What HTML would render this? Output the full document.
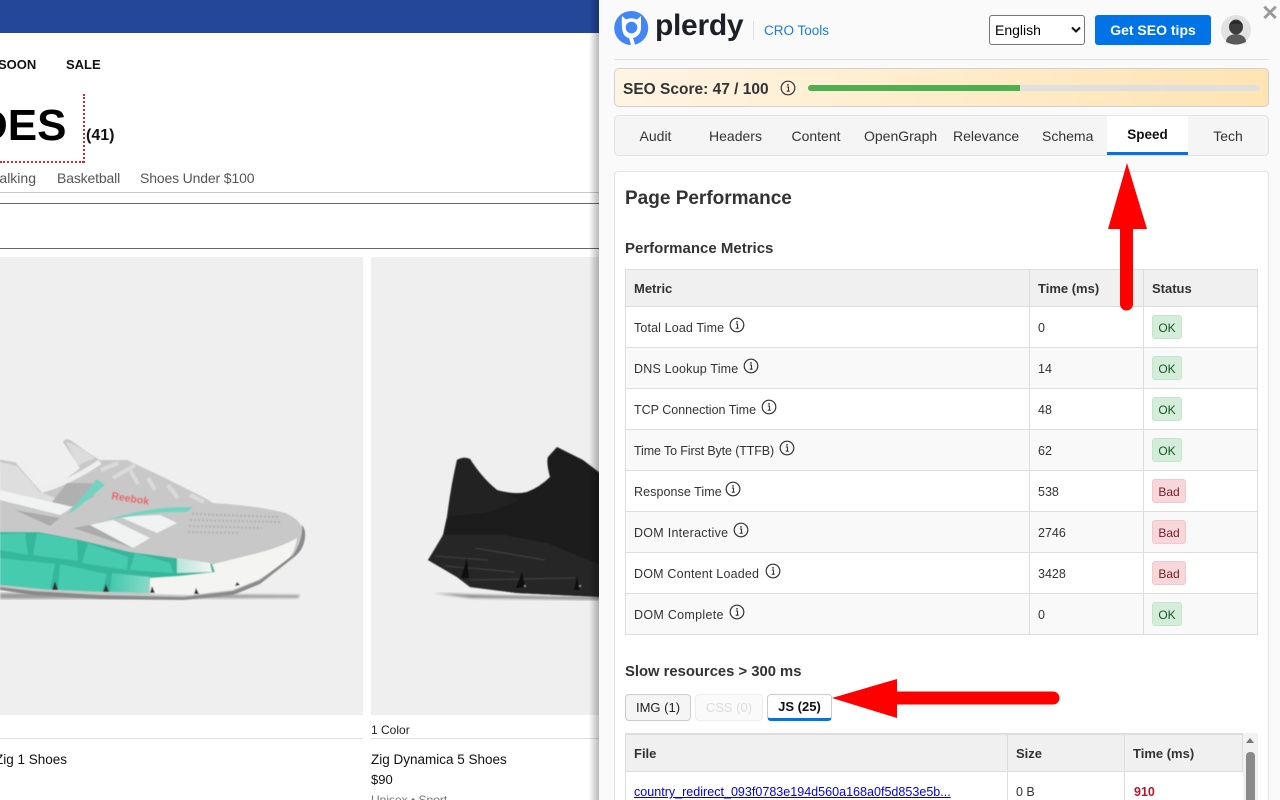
<!DOCTYPE html>
<html><head><meta charset="utf-8"><style>
html,body{margin:0;padding:0;width:1280px;height:800px;overflow:hidden;background:#fff}
*{box-sizing:border-box}
.a{position:absolute;white-space:nowrap}
body{font-family:"Liberation Sans",sans-serif;color:#333;position:relative}
.tab{position:absolute;top:124px;font-size:14px;color:#333;line-height:24px;text-align:center}
.b{position:absolute;left:1152px;width:30px;height:24px;border-radius:3px;font-size:12px;line-height:24px;text-align:center}
.ok{background:#d4edda;color:#155724;border:1px solid #c3e6cb}
.bad{background:#f8d7da;color:#721c24;border:1px solid #f5c6cb;width:34px}
.row{position:absolute;left:625px;width:633px;height:41px;border-bottom:1px solid #ddd;border-left:1px solid #ddd;border-right:1px solid #ddd}
.l{position:absolute;left:634px;font-size:12.5px;line-height:18px;color:#333;white-space:nowrap}
.t{position:absolute;left:1038px;font-size:12.5px;line-height:18px;color:#333}
.v{position:absolute;width:1px;background:#ddd}
.th{position:absolute;font-size:13px;font-weight:bold;color:#333;line-height:18px}
.i{position:absolute;width:16px;height:16px}
</style></head><body>
<svg width="0" height="0" style="position:absolute"><defs><g id="inf"><circle cx="8" cy="8" r="6.8" fill="none" stroke="#333" stroke-width="1.2"/><circle cx="8" cy="4.9" r=".9" fill="#333"/><path d="M6.8 7h1.7v4M6.700 11.200h3" fill="none" stroke="#333" stroke-width="1.1"/></g><filter id="sb"><feGaussianBlur stdDeviation=".6"/></filter><filter id="sh"><feGaussianBlur stdDeviation="1.2"/></filter></defs></svg>

<!-- page behind -->
<div class="a" style="left:0;top:0;width:600px;height:33px;background:#24479a"></div>
<div class="a" style="left:-2px;top:57px;font-size:13px;font-weight:bold;color:#111;line-height:16px">SOON</div>
<div class="a" style="left:66px;top:57px;font-size:13px;font-weight:bold;color:#111;line-height:16px;letter-spacing:0">SALE</div>
<div class="a" style="left:-24px;top:101px;font-size:44px;font-weight:bold;color:#000;line-height:50px">DES</div>
<div class="a" style="left:86px;top:126px;font-size:16px;font-weight:bold;color:#111;line-height:20px">(41)</div>
<div class="a" style="left:83px;top:94px;width:2px;height:69px;border-left:2px dotted #d9262e"></div>
<div class="a" style="left:0;top:161px;width:84px;height:2px;border-top:2px dotted #d9262e"></div>
<div class="a" style="left:-4px;top:170px;width:40px;overflow:hidden;font-size:14px;color:#555;line-height:17px;text-align:right">alking</div>
<div class="a" style="left:57px;top:170px;font-size:14px;color:#555;line-height:17px;letter-spacing:-.15px">Basketball</div>
<div class="a" style="left:140px;top:170px;font-size:14px;color:#555;line-height:17px;letter-spacing:-.15px">Shoes Under $100</div>
<div class="a" style="left:0;top:192px;width:600px;height:1px;background:#c8c8c8"></div>
<div class="a" style="left:0;top:203px;width:600px;height:1px;background:#666"></div>
<div class="a" style="left:0;top:248px;width:600px;height:1px;background:#666"></div>
<div class="a" style="left:0;top:257px;width:363px;height:458px;background:#f0eff0"></div>
<div class="a" style="left:371px;top:257px;width:229px;height:458px;background:#f0eff0"></div>

<!-- grey shoe: viewBox origin at (0,400) -->
<svg class="a" style="left:0;top:400px" width="320" height="220" viewBox="0 0 320 220">
<path d="M0 193 L300 195 L298 198 L0 199Z" fill="#9c9c9c" filter="url(#sh)"/>
<g filter="url(#sb)">
<path d="M0 55 L17 58 Q30 72 43 88 Q60 85 80 68 L63 42 Q66 37 72 41 Q86 52 100 60 L127 60 L165 78 L203 97 L213 103 Q260 106 285 113 Q303 120 305 137 Q303 150 293 157 Q275 172 260 182 Q245 192 233 193 Q210 198 183 199 L100 197 L33 193 L0 187Z" fill="#c8c8c8"/>
<path d="M66 42 Q72 42 95 58 L85 62 L78 66Z" fill="#dcdcdc"/>
<path d="M0 57 L17 60 Q30 76 43 90 Q70 82 100 62" fill="none" stroke="#eeeeee" stroke-width="5"/>
<path d="M0 62 L17 66 L40 92 L60 100 L52 102 L0 90Z" fill="#dedede"/>
<path d="M52 102 L67 83 L97 83 L93 97 L70 110Z" fill="#b0b0b0"/>
<path d="M15 110 L60 118 L50 126 Z M73 128 L90 125 L133 148 L115 142Z" fill="#ababab"/>
<path d="M0 90 L73 107 L60 115 L0 100Z M90 125 L113 120 L150 138 L133 148Z M120 117 L160 115 L177 123 L157 133Z" fill="#f1f3f2"/>
<path d="M67 115 L97 79 L105 85 L75 110Z M107 120 Q150 106 193 107 L187 112 Q150 112 133 116Z" fill="#6fd5c0"/>
<path d="M192 114 L280 117 M190 120 L282 122 M189 126 L262 128 M188 132 L240 133" stroke="#b0b0b0" stroke-width="2" stroke-dasharray="2 2" fill="none"/>
<path d="M101 70 L118 63 M113 78 L135 65 M130 70 L138 84 M148 78 L155 90 M168 85 L178 98 M190 95 L204 102" stroke="#dadada" stroke-width="4" fill="none"/>
<text x="111" y="99" transform="rotate(9 111 99)" font-family="Liberation Sans,sans-serif" font-size="10.500" font-weight="bold" fill="#e85a5f">Reebok</text>
<path d="M150 177 L178 174 L210 165 L250 155 Q280 148 297 138 Q296 148 290 157 Q275 170 258 180 L232 190 L190 195 L150 194Z" fill="#f4f4f2"/>
<path d="M0 132 L38 132 L80 140 L130 152 L175 158 L212 164 L215 172 L180 176 L150 178 L148 193 L60 190 L0 185Z" fill="#36b79c"/>
<defs><linearGradient id="fd" x1="0" x2="1"><stop offset="0" stop-color="#44c9ad"/><stop offset="1" stop-color="#f4f4f2"/></linearGradient></defs>
<path d="M0 134 L25 133 L28 155 L0 150Z M37 133 L77 140 L78 161 L33 155Z M88 143 L128 157 L127 170 L82 163Z M135 153 L170 163 L173 173 L130 170Z M0 158 L55 164 L50 190 L0 185Z M60 164 L107 174 L102 192 L58 190Z" fill="#46cbaf"/>
<path d="M177 158 L210 163 L212 172 L177 173Z M112 173 L150 177 L148 193 L110 192Z" fill="url(#fd)"/>
<path d="M0 187 L33 191 L100 195 L183 197 L233 191 L260 180 L293 155 Q303 140 302 125 Q306 130 305 137 Q304 150 293 158 L260 184 L233 195 L183 200 L100 199 L33 195 L0 190Z" fill="#8a8a8a"/>
<path d="M150 193 L152 186 L155 193Z M194 194 L196 188 L199 194Z M235 186 L237 182 L240 185Z M103 192 L106 184 L109 192Z M52 190 L55 181 L58 190Z" fill="#333"/>
</g></svg>

<!-- black shoe: absolute coordinates -->
<svg class="a" style="left:371px;top:430px" width="229" height="180" viewBox="371 430 229 180">
<path d="M433 593 Q500 596 600 597 L600 600 L470 598Z" fill="#8a8a8a" filter="url(#sh)"/>
<g filter="url(#sb)">
<path d="M457 460 Q464 456 470 459 Q482 478 497 490 Q515 495 527 492 Q540 487 550 477 Q546 462 548 457 L557 447 L583 460 L600 473 L600 597 L517 593 L470 587 L457 577 L428 560 Q436 548 443 535 Q445 525 447 517 Q451 485 457 460Z" fill="#1a1a1a"/>
<path d="M457 460 Q464 456 470 459 Q482 478 497 490 L520 500 L490 512 L447 517Z" fill="#212121"/>
<path d="M443 535 L493 535 L503 535 L547 543 L600 565 L600 597 L517 593 L470 587 L457 577 L428 560Z" fill="#262626"/>
<path d="M435 556 L488 560 M445 566 L515 572 M470 580 L575 578 M475 548 L545 560" stroke="#3c3c3c" stroke-width="1.300" fill="none"/>
<path d="M461 578 L467 558 L469 578Z M516 588 L522 572 L525 587Z M574 590 L577 576 L580 590Z" fill="#0a0a0a"/>
<circle cx="525" cy="586" r="1" fill="#999"/><circle cx="580" cy="586" r="1" fill="#999"/>
</g></svg>

<div class="a" style="left:371px;top:723px;font-size:12px;color:#222;line-height:15px">1 Color</div>
<div class="a" style="left:0;top:738px;width:363px;height:1px;background:#ddd"></div>
<div class="a" style="left:371px;top:738px;width:229px;height:1px;background:#ddd"></div>
<div class="a" style="left:-5px;top:751px;font-size:13.5px;color:#111;line-height:17px">Zig 1 Shoes</div>
<div class="a" style="left:371px;top:751px;font-size:13.5px;color:#111;line-height:17px">Zig Dynamica 5 Shoes</div>
<div class="a" style="left:371px;top:772px;font-size:13px;color:#111;line-height:16px">$90</div>
<div class="a" style="left:371px;top:793px;font-size:12px;color:#777;line-height:15px">Unisex • Sport</div>

<!-- panel -->
<div class="a" style="left:589px;top:0;width:10px;height:800px;background:linear-gradient(90deg,rgba(0,0,0,0),rgba(0,0,0,.28))"></div>
<div class="a" style="left:599px;top:0;width:681px;height:800px;background:#fafafa"></div>

<!-- logo -->
<svg class="a" style="left:614px;top:11px" width="35" height="35" viewBox="0 0 35 35">
<circle cx="17.200" cy="17" r="17" fill="#4287f5"/>
<path d="M8 5 Q7.500 12 8 17 Q9 26 15 27 L17 34 L21 33.500 L19 27 Q27 25 27 16 L27 5 L23 8.500 Q17 6 12 8.500Z" fill="#fff"/>
<circle cx="17.500" cy="16.500" r="5.800" fill="#4287f5"/>
</svg>
<div class="a" style="left:655px;top:6px;font-size:30px;font-weight:bold;color:#1d2028;line-height:40px;letter-spacing:-.3px">plerdy</div>
<div class="a" style="left:753px;top:21px;width:1px;height:19px;background:#ddd"></div>
<div class="a" style="left:764px;top:22px;font-size:13.500px;color:#1a7ae8;line-height:18px">CRO Tools</div>

<div class="a" style="left:989px;top:15px;width:96px;height:30px;background:#fff;border:1px solid #767676;border-radius:3px;font-size:14px;color:#000;line-height:28px;padding-left:5px">English
<svg style="position:absolute;left:81px;top:10px" width="10" height="8" viewBox="0 0 10 8"><path d="M1 1.500 L5 5.500 L9 1.500" fill="none" stroke="#111" stroke-width="2"/></svg></div>
<div class="a" style="left:1095px;top:15px;width:116px;height:30px;background:#0073e6;border-radius:3px;color:#fff;font-size:14px;font-weight:bold;line-height:30px;text-align:center">Get SEO tips</div>
<svg class="a" style="left:1221px;top:15px" width="30" height="30" viewBox="0 0 30 30"><circle cx="15" cy="15" r="15" fill="#e2e2e2"/><path d="M5 27 Q5 20 15 19 Q25 20 25 27 Q15 32 5 27Z" fill="#5a5a5a"/><ellipse cx="15" cy="12" rx="7" ry="7.500" fill="#3c3c3c"/><path d="M8 10 Q15 2 22 10 Q15 7 8 10Z" fill="#262626"/></svg>
<div class="a" style="left:1261px;top:3px;font-size:21px;font-weight:bold;color:#999;line-height:22px;width:18px;text-align:center">✕</div>
<div class="a" style="left:614px;top:59px;width:655px;height:1px;background:#e0e0e0"></div>

<!-- score -->
<div class="a" style="left:614px;top:68px;width:655px;height:39px;border:1px solid #d0d0d0;border-radius:5px;background:linear-gradient(90deg,#fff4e3,#ffe4b3)"></div>
<div class="a" style="left:623px;top:81px;font-size:15.500px;font-weight:bold;color:#333;line-height:18px">SEO Score: 47 / 100</div>
<svg class="i" style="left:780px;top:80px" viewBox="0 0 16 16"><use href="#inf"/></svg>
<div class="a" style="left:808px;top:85px;width:452px;height:6px;border-radius:3px;background:#dfdfdf"></div>
<div class="a" style="left:808px;top:85px;width:212px;height:6px;border-radius:3px 0 0 3px;background:#4caf50"></div>

<!-- tabs -->
<div class="a" style="left:614px;top:115px;width:655px;height:41px;background:#f5f5f5;border:1px solid #e2e2e2;border-radius:5px"></div>
<div class="tab" style="left:639px;width:33px">Audit</div>
<div class="tab" style="left:709px;width:53px">Headers</div>
<div class="tab" style="left:791px;width:50px">Content</div>
<div class="tab" style="left:864px;width:73px">OpenGraph</div>
<div class="tab" style="left:953px;width:66px">Relevance</div>
<div class="tab" style="left:1042px;width:51px">Schema</div>
<div class="a" style="left:1107px;top:116px;width:81px;height:39px;background:#fff;border-bottom:3px solid #0073e6"></div>
<div class="tab" style="left:1107px;width:81px;top:123px;font-size:13.500px;font-weight:bold;color:#111">Speed</div>
<div class="tab" style="left:1213px;width:30px">Tech</div>

<!-- card -->
<div class="a" style="left:614px;top:171px;width:655px;height:640px;background:#fff;border:1px solid #e3e3e3;border-radius:4px"></div>
<div class="a" style="left:625px;top:187px;font-size:19px;font-weight:bold;color:#333;line-height:24px">Page Performance</div>
<div class="a" style="left:625px;top:239px;font-size:15px;font-weight:bold;color:#333;line-height:19px">Performance Metrics</div>

<!-- metrics table -->
<div class="a" style="left:625px;top:269px;width:633px;height:38px;background:#f0f0f0;border:1px solid #ddd"></div>
<div class="row" style="top:307px;height:41px;background:#fff"></div>
<div class="row" style="top:348px;background:#f9f9f9"></div>
<div class="row" style="top:389px;background:#fff"></div>
<div class="row" style="top:430px;background:#f9f9f9"></div>
<div class="row" style="top:471px;background:#fff"></div>
<div class="row" style="top:512px;background:#f9f9f9"></div>
<div class="row" style="top:553px;background:#fff"></div>
<div class="row" style="top:594px;background:#f9f9f9"></div>
<div class="v" style="left:1029px;top:269px;height:366px"></div>
<div class="v" style="left:1143px;top:269px;height:366px"></div>
<div class="th" style="left:634px;top:280px">Metric</div>
<div class="th" style="left:1038px;top:280px">Time (ms)</div>
<div class="th" style="left:1152px;top:280px">Status</div>

<div class="l" style="top:319px;letter-spacing:.13px">Total Load Time</div><svg class="i" style="left:729px;top:317px" viewBox="0 0 16 16"><use href="#inf"/></svg><div class="t" style="top:319px">0</div><div class="b ok" style="top:315px">OK</div>
<div class="l" style="top:360px;letter-spacing:.2px">DNS Lookup Time</div><svg class="i" style="left:743px;top:358px" viewBox="0 0 16 16"><use href="#inf"/></svg><div class="t" style="top:360px">14</div><div class="b ok" style="top:356px">OK</div>
<div class="l" style="top:401px">TCP Connection Time</div><svg class="i" style="left:761px;top:399px" viewBox="0 0 16 16"><use href="#inf"/></svg><div class="t" style="top:401px">48</div><div class="b ok" style="top:397px">OK</div>
<div class="l" style="top:442px;letter-spacing:-.12px">Time To First Byte (TTFB)</div><svg class="i" style="left:779px;top:440px" viewBox="0 0 16 16"><use href="#inf"/></svg><div class="t" style="top:442px">62</div><div class="b ok" style="top:438px">OK</div>
<div class="l" style="top:483px;letter-spacing:.07px">Response Time</div><svg class="i" style="left:725px;top:481px" viewBox="0 0 16 16"><use href="#inf"/></svg><div class="t" style="top:483px">538</div><div class="b bad" style="top:479px">Bad</div>
<div class="l" style="top:524px;letter-spacing:.27px">DOM Interactive</div><svg class="i" style="left:733px;top:522px" viewBox="0 0 16 16"><use href="#inf"/></svg><div class="t" style="top:524px">2746</div><div class="b bad" style="top:520px">Bad</div>
<div class="l" style="top:565px;letter-spacing:.2px">DOM Content Loaded</div><svg class="i" style="left:765px;top:563px" viewBox="0 0 16 16"><use href="#inf"/></svg><div class="t" style="top:565px">3428</div><div class="b bad" style="top:561px">Bad</div>
<div class="l" style="top:606px;letter-spacing:.3px">DOM Complete</div><svg class="i" style="left:729px;top:604px" viewBox="0 0 16 16"><use href="#inf"/></svg><div class="t" style="top:606px">0</div><div class="b ok" style="top:602px">OK</div>

<!-- slow -->
<div class="a" style="left:625px;top:663px;font-size:14.800px;font-weight:bold;color:#333;line-height:19px">Slow resources &gt; 300 ms</div>
<div class="a" style="left:625px;top:694px;width:66px;height:27px;background:#f5f5f5;border:1px solid #ccc;border-radius:4px;font-size:13px;color:#222;line-height:25px;text-align:center">IMG (1)</div>
<div class="a" style="left:695px;top:694px;width:68px;height:27px;background:#fafafa;border:1px solid #eee;border-radius:4px;font-size:13px;color:#ddd;line-height:25px;text-align:center">CSS (0)</div>
<div class="a" style="left:767px;top:694px;width:65px;height:27px;background:#fff;border:1px solid #ccc;border-bottom:3px solid #0073e6;border-radius:4px;font-size:13px;font-weight:bold;color:#111;line-height:24px;text-align:center">JS (25)</div>

<!-- table 2 -->
<div class="a" style="left:625px;top:733px;width:618px;height:39px;background:#f0f0f0;border:1px solid #ddd;border-top-width:2px"></div>
<div class="a" style="left:625px;top:772px;width:618px;height:28px;background:#fff;border-left:1px solid #ddd"></div>
<div class="v" style="left:1007px;top:733px;height:67px"></div>
<div class="v" style="left:1124px;top:733px;height:67px"></div>
<div class="th" style="left:634px;top:745px">File</div>
<div class="th" style="left:1016px;top:745px">Size</div>
<div class="th" style="left:1133px;top:745px">Time (ms)</div>
<div class="a" style="left:634px;top:783px;font-size:12.560px;color:#0000ee;line-height:18px;text-decoration:underline">country_redirect_093f0783e194d560a168a0f5d853e5b...</div>
<div class="a" style="left:1016px;top:783px;font-size:12.500px;color:#333;line-height:18px">0 B</div>
<div class="a" style="left:1134px;top:783px;font-size:12.500px;font-weight:bold;color:#b3172b;line-height:18px">910</div>
<div class="a" style="left:1243px;top:733px;width:15px;height:67px;background:#f1f1f1"></div>
<div class="a" style="left:1246px;top:738px;width:0;height:0;border-left:4px solid transparent;border-right:4px solid transparent;border-bottom:5px solid #777"></div>
<div class="a" style="left:1246px;top:752px;width:9px;height:48px;border-radius:4px 4px 0 0;background:#8a8a8a"></div>

<!-- arrows -->
<svg class="a" style="left:0;top:0" width="1280" height="800" viewBox="0 0 1280 800">
<path d="M1126.500 304 V228" stroke="#f00" stroke-width="13" stroke-linecap="round"/>
<path d="M1127 163 L1147 229 L1108 229Z" fill="#f00"/>
<path d="M1053 698 H896" stroke="#f00" stroke-width="13" stroke-linecap="round"/>
<path d="M832 698 L897 679 L897 718Z" fill="#f00"/>
</svg>
</body></html>
